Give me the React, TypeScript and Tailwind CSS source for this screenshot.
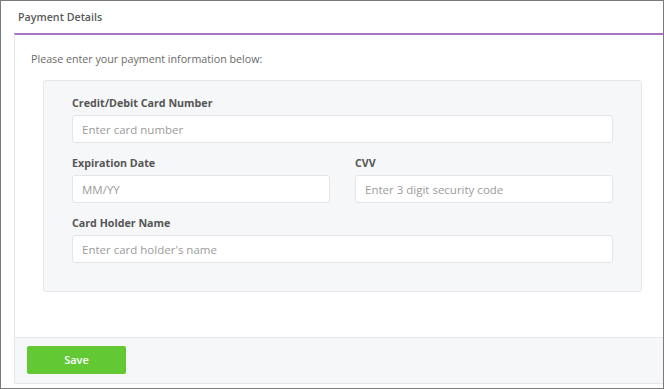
export default function App() {
  return (
    <div
      className="w-[664px] h-[389px] border border-[#7a7a7a] bg-white pl-[13px] text-[10.7px] text-[#555]"
      style={{ fontFamily: '"Open Sans", "Liberation Sans", sans-serif' }}
    >
      {/* header */}
      <div className="h-[32px] flex items-center pl-[4px] font-semibold text-[#5a5a5a]">
        Payment Details
      </div>

      {/* card */}
      <div className="border-t-2 border-t-[#a974c8] border-l border-b border-[#e6e7e9]">
        <div className="h-[302px] px-[16px] pt-[15px]">
          <p className="leading-[18px] text-[#6a6a6a]">Please enter your payment information below:</p>

          <div className="mt-[12px] ml-[12px] w-[599px] h-[212px] bg-[#f6f7f9] border border-[#e5e7ea] rounded-[3px] px-[28px] pt-[13px]">
            <label className="block font-bold leading-[18px] mb-[3px]">Credit/Debit Card Number</label>
            <input
              className="block w-full h-[28px] bg-white border border-[#e3e5e8] rounded-[3px] px-[9px] text-[11.5px] placeholder:text-[#9c9c9c] outline-none"
              placeholder="Enter card number"
            />

            <div className="grid grid-cols-2 gap-x-[25px] mt-[11px]">
              <div>
                <label className="block font-bold leading-[18px] mb-[3px]">Expiration Date</label>
                <input
                  className="block w-full h-[28px] bg-white border border-[#e3e5e8] rounded-[3px] px-[9px] text-[11.5px] placeholder:text-[#9c9c9c] outline-none"
                  placeholder="MM/YY"
                />
              </div>
              <div>
                <label className="block font-bold leading-[18px] mb-[3px]">CVV</label>
                <input
                  className="block w-full h-[28px] bg-white border border-[#e3e5e8] rounded-[3px] px-[9px] text-[11.5px] placeholder:text-[#9c9c9c] outline-none"
                  placeholder="Enter 3 digit security code"
                />
              </div>
            </div>

            <label className="block font-bold leading-[18px] mb-[3px] mt-[11px]">Card Holder Name</label>
            <input
              className="block w-full h-[28px] bg-white border border-[#e3e5e8] rounded-[3px] px-[9px] text-[11.5px] placeholder:text-[#9c9c9c] outline-none"
              placeholder="Enter card holder's name"
            />
          </div>
        </div>

        {/* footer */}
        <div className="h-[46px] border-t border-[#e6e7e9] bg-[#f6f7f9] pl-[12px] pt-[8px]">
          <button className="w-[99px] h-[28px] rounded-[2px] bg-[#62c934] text-white font-semibold text-[11px]">
            Save
          </button>
        </div>
      </div>
    </div>
  )
}
